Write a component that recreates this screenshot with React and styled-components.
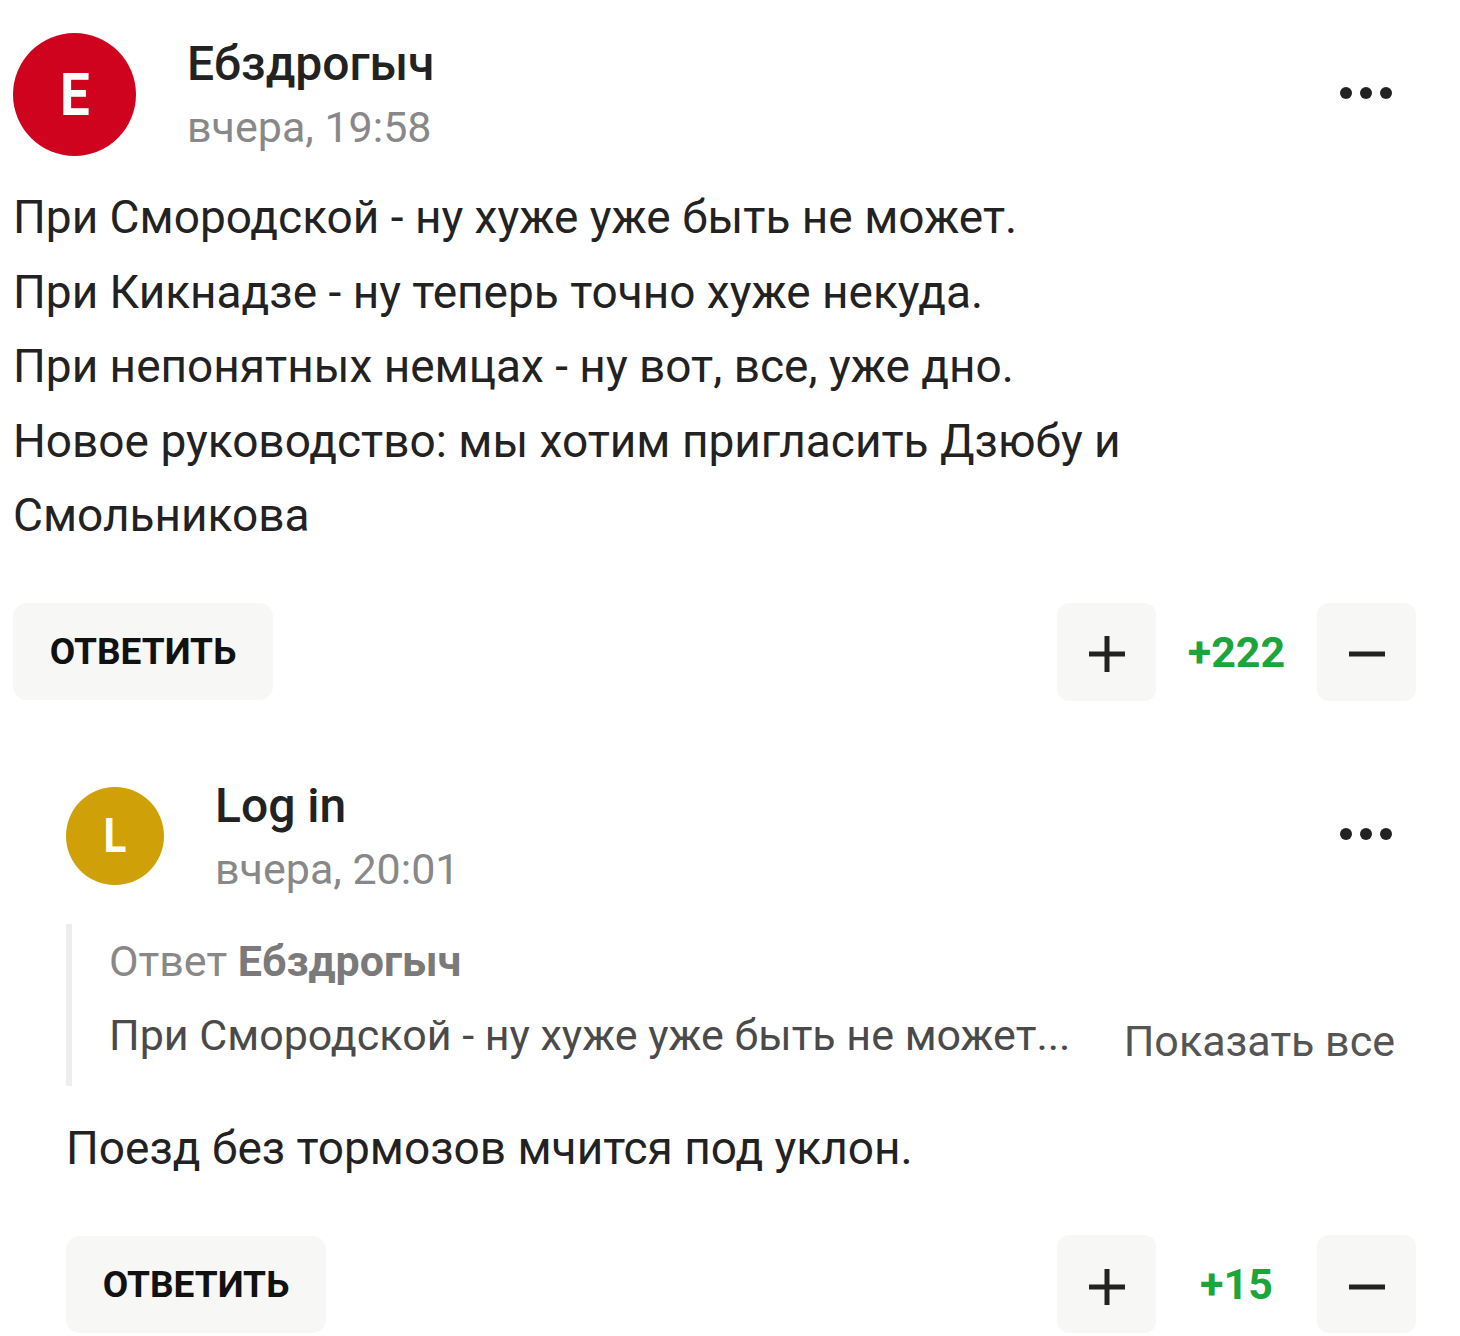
import React from 'react';
import styled, { createGlobalStyle } from 'styled-components';

const GlobalStyle = createGlobalStyle`
  body {
    margin: 0;
    background: #fff;
    font-family: Roboto, "Liberation Sans", sans-serif;
    color: #222;
  }
`;

const Page = styled.div`
  padding: 33px 44px 0 13px;
`;

const Comment = styled.div`
  display: flex;
  flex-direction: column;
  padding-left: ${p => p.$indent || 0}px;
  margin-top: ${p => p.$top || 0}px;
`;

const Header = styled.div`
  display: flex;
  align-items: center;
`;

const Avatar = styled.div`
  width: ${p => p.$size}px;
  height: ${p => p.$size}px;
  border-radius: 50%;
  background: ${p => p.$color};
  color: #fff;
  display: flex;
  align-items: center;
  justify-content: center;
  flex-shrink: 0;
  font-weight: 700;
  font-size: ${p => p.$font}px;
`;

const Letter = styled.span`
  display: inline-block;
  line-height: 1;
  transform: scaleX(0.88);
`;

const Meta = styled.div`
  flex: 1;
  margin-left: 51px;
  display: flex;
  flex-direction: column;
  gap: 9px;
`;

const Name = styled.div`
  font-size: 48px;
  line-height: 56px;
  font-weight: 500;
  color: #222;
`;

const Time = styled.div`
  font-size: 43px;
  line-height: 52px;
  color: #888;
`;

const More = styled.button`
  border: none;
  background: none;
  padding: 0;
  margin: 0 23px 4px 0;
  display: flex;
  color: #222;
`;

const Text = styled.div`
  margin-top: ${p => p.$top || 24}px;
  font-size: 46px;
  line-height: 74.5px;
  color: #222;
`;

const Actions = styled.div`
  margin-top: 50px;
  display: flex;
  align-items: center;
  justify-content: space-between;
`;

const ReplyButton = styled.button`
  width: 260px;
  height: 97px;
  border: none;
  border-radius: 14px;
  background: #f7f7f5;
  font-family: inherit;
  font-size: 37px;
  font-weight: 700;
  color: #111;
  padding: 0;
`;

const Votes = styled.div`
  display: flex;
  align-items: center;
`;

const VoteButton = styled.button`
  width: 99px;
  height: 98px;
  border: none;
  border-radius: 12px;
  background: #f7f7f5;
  display: flex;
  align-items: center;
  justify-content: center;
  padding: 5px 0 0;
  color: #222;
`;

const Score = styled.div`
  width: 161px;
  text-align: center;
  font-size: 43px;
  font-weight: 700;
  color: #1ba53b;
`;

const Quote = styled.div`
  margin-top: 29px;
  border-left: 6px solid #ededed;
  padding: 0 0 14px 37px;
  font-size: 43px;
  line-height: 74px;
`;

const QuoteTitle = styled.div`
  color: #888;
  b {
    font-weight: 700;
    color: #7a7a7a;
  }
`;

const QuoteRow = styled.div`
  display: flex;
  justify-content: space-between;
  align-items: baseline;
`;

const QuoteText = styled.div`
  color: #4a4a4a;
`;

const ShowAll = styled.button`
  border: none;
  background: none;
  padding: 0;
  margin-right: 21px;
  position: relative;
  top: 6px;
  font-family: inherit;
  font-size: 43px;
  color: #555;
`;

const Dots = () => (
  <svg width="54" height="14" viewBox="0 0 54 14">
    <circle cx="7" cy="7" r="6" fill="currentColor" />
    <circle cx="27" cy="7" r="6" fill="currentColor" />
    <circle cx="47" cy="7" r="6" fill="currentColor" />
  </svg>
);

const Plus = () => (
  <svg width="38" height="38" viewBox="0 0 38 38">
    <path d="M1 19h36M19 1v36" stroke="currentColor" strokeWidth="5" />
  </svg>
);

const Minus = () => (
  <svg width="38" height="38" viewBox="0 0 38 38">
    <path d="M1 19h36" stroke="currentColor" strokeWidth="5" />
  </svg>
);

const VoteBar = ({ score }) => (
  <Votes>
    <VoteButton><Plus /></VoteButton>
    <Score>{score}</Score>
    <VoteButton><Minus /></VoteButton>
  </Votes>
);

const App = () => {
  return (
    <Page>
      <GlobalStyle />
      <Comment>
        <Header>
          <Avatar $size={123} $color="#d0031f" $font={60}><Letter>Е</Letter></Avatar>
          <Meta>
            <Name>Ебздрогыч</Name>
            <Time>вчера, 19:58</Time>
          </Meta>
          <More><Dots /></More>
        </Header>
        <Text>
          При Смородской - ну хуже уже быть не может.<br />
          При Кикнадзе - ну теперь точно хуже некуда.<br />
          При непонятных немцах - ну вот, все, уже дно.<br />
          Новое руководство: мы хотим пригласить Дзюбу и<br />
          Смольникова
        </Text>
        <Actions>
          <ReplyButton>ОТВЕТИТЬ</ReplyButton>
          <VoteBar score="+222" />
        </Actions>
      </Comment>

      <Comment $indent={53} $top={77}>
        <Header>
          <Avatar $size={98} $color="#cfa008" $font={48}><Letter>L</Letter></Avatar>
          <Meta>
            <Name>Log in</Name>
            <Time>вчера, 20:01</Time>
          </Meta>
          <More><Dots /></More>
        </Header>
        <Quote>
          <QuoteTitle>Ответ <b>Ебздрогыч</b></QuoteTitle>
          <QuoteRow>
            <QuoteText>При Смородской - ну хуже уже быть не может...</QuoteText>
            <ShowAll>Показать все</ShowAll>
          </QuoteRow>
        </Quote>
        <Text $top={25}>Поезд без тормозов мчится под уклон.</Text>
        <Actions>
          <ReplyButton>ОТВЕТИТЬ</ReplyButton>
          <VoteBar score="+15" />
        </Actions>
      </Comment>
    </Page>
  );
};

export default App;
